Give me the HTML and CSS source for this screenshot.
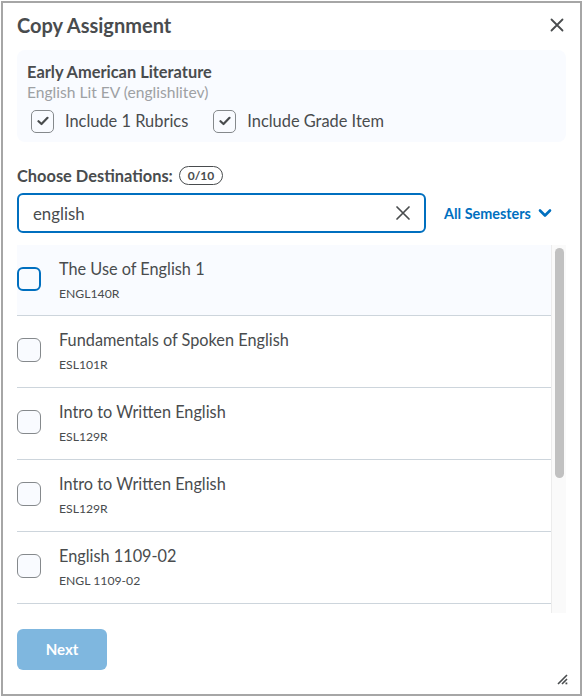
FILE: index.html
```html
<!DOCTYPE html>
<html>
<head>
<meta charset="utf-8">
<link rel="stylesheet" href="styles.css">
</head>
<body>
<div class="dialog">
  <div class="header">
    <h1 class="title">Copy Assignment</h1>
    <button class="close" aria-label="Close">
      <svg width="14" height="14" viewBox="0 0 14 14"><path d="M1.5 1.5 L12.5 12.5 M12.5 1.5 L1.5 12.5" stroke="#494c4e" stroke-width="1.8" stroke-linecap="round"/></svg>
    </button>
  </div>

  <div class="card">
    <div class="card-title">Early American Literature</div>
    <div class="card-sub">English Lit EV (englishlitev)</div>
    <div class="card-opts">
      <label class="opt"><span class="cb cb-small"><svg width="12" height="10" viewBox="0 0 12 10"><path d="M1.5 5.2 L4.5 8 L10.5 1.8" fill="none" stroke="#494c4e" stroke-width="2.2" stroke-linecap="round" stroke-linejoin="round"/></svg></span>Include 1 Rubrics</label>
      <label class="opt"><span class="cb cb-small"><svg width="12" height="10" viewBox="0 0 12 10"><path d="M1.5 5.2 L4.5 8 L10.5 1.8" fill="none" stroke="#494c4e" stroke-width="2.2" stroke-linecap="round" stroke-linejoin="round"/></svg></span>Include Grade Item</label>
    </div>
  </div>

  <div class="dest-row">
    <span class="dest-label">Choose Destinations:</span>
    <span class="badge">0/10</span>
  </div>

  <div class="search-row">
    <div class="search">
      <span class="search-text">english</span>
      <svg class="clear" width="16" height="16" viewBox="0 0 16 16"><path d="M2 2 L14 14 M14 2 L2 14" stroke="#494c4e" stroke-width="1.7" stroke-linecap="round"/></svg>
    </div>
    <button class="semesters">All Semesters
      <svg width="14" height="10" viewBox="0 0 14 10"><path d="M2 2.5 L7 7.5 L12 2.5" fill="none" stroke="#006fbf" stroke-width="2.6" stroke-linecap="round" stroke-linejoin="round"/></svg>
    </button>
  </div>

  <div class="list-wrap">
    <div class="list">
      <div class="item active"><span class="cb cb-big focus"></span><div class="item-text"><div class="item-name">The Use of English 1</div><div class="item-code">ENGL140R</div></div></div>
      <div class="item"><span class="cb cb-big"></span><div class="item-text"><div class="item-name">Fundamentals of Spoken English</div><div class="item-code">ESL101R</div></div></div>
      <div class="item"><span class="cb cb-big"></span><div class="item-text"><div class="item-name">Intro to Written English</div><div class="item-code">ESL129R</div></div></div>
      <div class="item"><span class="cb cb-big"></span><div class="item-text"><div class="item-name">Intro to Written English</div><div class="item-code">ESL129R</div></div></div>
      <div class="item"><span class="cb cb-big"></span><div class="item-text"><div class="item-name">English 1109-02</div><div class="item-code">ENGL 1109-02</div></div></div>
      <div class="item"><span class="cb cb-big"></span><div class="item-text"><div class="item-name">English Composition</div><div class="item-code">ENGL101</div></div></div>
    </div>
    <div class="scrollbar"><div class="thumb"></div></div>
  </div>

  <div class="footer">
    <button class="next" disabled>Next</button>
  </div>
  <svg class="resize" width="12" height="12" viewBox="0 0 12 12"><path d="M2 11 L11 2 M6 11 L11 6" stroke="#494c4e" stroke-width="1.6"/><rect x="9.5" y="9.5" width="1.8" height="1.8" fill="#494c4e"/></svg>
</div>
</body>
</html>
```

FILE: styles.css
```css
* { box-sizing: border-box; }
html, body { margin: 0; padding: 0; background: #fff; }
body { font-family: Lato, "Open Sans", sans-serif; color: #494c4e; }

.dialog {
  position: relative;
  margin: 1px;
  width: 581px;
  height: 695px;
  border: 2px solid #a6a6a6;
  background: #fff;
  padding: 0 14px;
  display: flex;
  flex-direction: column;
}

.header {
  height: 47px;
  display: flex;
  align-items: center;
  justify-content: space-between;
  padding-bottom: 4px;
}
.title {
  margin: 0;
  font-size: 20px;
  font-weight: 700;
  line-height: 24px;
}
.close {
  border: 0;
  background: none;
  padding: 0;
  margin-right: 1px;
  width: 16px;
  height: 16px;
  display: flex;
  align-items: center;
  justify-content: center;
}

.card {
  background: #f9fbff;
  border-radius: 8px;
  padding: 12px 10px 9px;
}
.card-title { font-size: 16.4px; font-weight: 700; line-height: 20px; }
.card-sub { font-size: 15.6px; line-height: 20px; color: #9ea1a4; }
.card-opts { display: flex; gap: 25px; margin-top: 7px; padding-left: 4px; }
.opt { display: flex; align-items: center; font-size: 16.4px; line-height: 24px; }

.cb {
  display: inline-flex;
  align-items: center;
  justify-content: center;
  border: 1px solid #85898c;
  border-radius: 6px;
  background: #f9fbff;
  flex: none;
}
.cb-small { width: 23px; height: 23px; margin-right: 11px; border-radius: 5px; }
.cb-big { width: 24px; height: 24px; margin-top: -3px; }
.cb.focus { border: 2px solid #006fbf; }

.dest-row {
  display: flex;
  align-items: center;
  margin-top: 23px;
  height: 20px;
}
.dest-label { font-size: 16.4px; font-weight: 700; }
.badge {
  margin-left: 6px;
  border: 1px solid #494c4e;
  border-radius: 10px;
  font-size: 12px;
  font-weight: 700;
  line-height: 17px;
  padding: 0 8px;
}

.search-row {
  display: flex;
  align-items: center;
  margin-top: 8px;
}
.search {
  flex: 1;
  height: 40px;
  border: 2px solid #006fbf;
  border-radius: 6px;
  display: flex;
  align-items: center;
  justify-content: space-between;
  padding: 0 13px 0 14px;
}
.search-text { font-size: 16.8px; }
.semesters {
  width: 140px;
  border: 0;
  background: none;
  padding: 0 0 0 18px;
  font-family: inherit;
  font-size: 14.4px;
  font-weight: 700;
  color: #006fbf;
  display: flex;
  align-items: center;
  gap: 7px;
}

.list-wrap {
  margin-top: 12px;
  height: 368px;
  display: flex;
}
.list {
  flex: 1;
  overflow: hidden;
}
.scrollbar {
  width: 15px;
  background: #fafafa;
  border-left: 1px solid #ececec;
  padding: 3px 2px 0 3px;
}
.thumb {
  height: 230px;
  background: #c1c1c1;
  border-radius: 5px;
}

.item {
  height: 72px;
  display: flex;
  align-items: center;
  gap: 18px;
  border-bottom: 1px solid #cdd5dc;
}
.item.active { background: #f9fbff; height: 71px; }
.item-text { display: flex; flex-direction: column; margin-top: -1px; }
.item-name { font-size: 16.3px; line-height: 22px; }
.item-code { font-size: 12.2px; line-height: 16px; margin-top: 6px; }

.footer { margin-top: 16px; }
.next {
  width: 90px;
  height: 41px;
  border: 0;
  border-radius: 6px;
  background: #7fb7df;
  color: #fff;
  font-family: inherit;
  font-size: 15px;
  font-weight: 700;
  line-height: 41px;
  padding: 0;
}

.resize { position: absolute; right: 12px; bottom: 9px; }
```
